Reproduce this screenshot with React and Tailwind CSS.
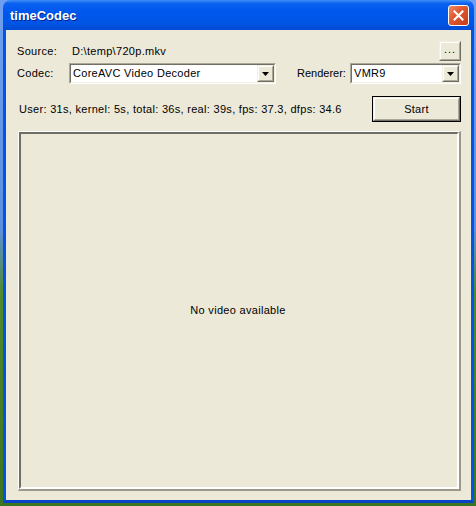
import React from 'react'

const font = { fontFamily: '"Liberation Sans", Arial, sans-serif' }

// classic 3D raised box (button face)
const Raised = ({ className = '', children }) => (
  <div className={`border border-t-[#f1efe2] border-l-[#f1efe2] border-r-[#716f64] border-b-[#716f64] ${className}`}>
    <div className="flex h-full w-full items-center justify-center border border-t-white border-l-white border-r-[#aca899] border-b-[#aca899] bg-[#ece9d8]">
      {children}
    </div>
  </div>
)

const Combo = ({ value, className = '' }) => (
  <div className={`border border-t-[#aca899] border-l-[#aca899] border-r-white border-b-white ${className}`}>
    <div className="flex h-full items-center border border-t-[#716f64] border-l-[#716f64] border-r-[#f1efe2] border-b-[#f1efe2] bg-white">
      <span className="flex-1 pl-[2px] text-black">{value}</span>
      <Raised className="h-[17px] w-[17px]">
        <svg width="7" height="4" viewBox="0 0 7 4">
          <path d="M0 0h7L3.5 4z" fill="#000" />
        </svg>
      </Raised>
    </div>
  </div>
)

export default function App() {
  return (
    <div
      className="h-[506px] w-[476px] bg-[linear-gradient(to_bottom,#6f9ff0_0%,#5d8fe0_45%,#4f8a2c_58%,#3d7420_100%)] pl-[3px] text-[11px] tracking-[0.3px] text-black"
      style={font}
    >
      <div className="flex h-[503px] w-[471px] flex-col">
        {/* title bar */}
        <div className="flex h-[30px] items-center rounded-t-[8px] bg-[linear-gradient(to_bottom,#3d8ff7_0%,#0b61ef_12%,#0058ee_35%,#0055e5_75%,#004bd4_100%)] pl-[7px] pr-[5px]">
          <span className="flex-1 pt-[2px] text-[13px] font-bold tracking-normal text-white [text-shadow:1px_1px_0_#0a1f8a]">
            timeCodec
          </span>
          <div className="flex h-[21px] w-[21px] items-center justify-center rounded-[3px] border border-white bg-[linear-gradient(135deg,#f08a66_0%,#e05a34_40%,#c83a17_100%)]">
            <svg width="11" height="11" viewBox="0 0 11 11">
              <path d="M1.5 1.5l8 8M9.5 1.5l-8 8" stroke="#fff" strokeWidth="2" strokeLinecap="square" />
            </svg>
          </div>
        </div>

        {/* client area */}
        <div className="flex flex-1 flex-col border-x-[3px] border-b-[3px] border-x-[#0055e5] border-b-[#0842c8] bg-[#ece9d8] pl-[11px] pr-[10px]">
          <div className="mt-[11px] flex h-[20px] items-center">
            <span className="w-[55px]">Source:</span>
            <span className="flex-1">D:\temp\720p.mkv</span>
            <Raised className="h-[20px] w-[22px]">
              <span className="pb-[3px] leading-none tracking-[1px]">...</span>
            </Raised>
          </div>

          <div className="mt-[2px] flex h-[21px] items-center">
            <span className="w-[52px]">Codec:</span>
            <Combo value="CoreAVC Video Decoder" className="h-[21px] w-[207px]" />
            <span className="ml-[21px] w-[53px] tracking-normal">Renderer:</span>
            <Combo value="VMR9" className="h-[21px] flex-1" />
          </div>

          <div className="mt-[12px] flex h-[26px] items-center">
            <span className="flex-1 pl-[2px]">
              User: 31s, kernel: 5s, total: 36s, real: 39s, fps: 37.3, dfps: 34.6
            </span>
            <div className="h-[26px] w-[89px] border border-black">
              <Raised className="h-full w-full">
                <span>Start</span>
              </Raised>
            </div>
          </div>

          <div className="ml-[1px] mt-[9px] h-[360px] border-l border-t border-l-white border-t-white border-r-2 border-b-2 border-r-[#9c998b] border-b-[#9c998b]">
            <div className="flex h-full items-center justify-center border-l-2 border-t-2 border-l-[#716f64] border-t-[#716f64] border-r-2 border-b-2 border-r-white border-b-white bg-[#ece9d8]">
              <span className="pr-[2px]">No video available</span>
            </div>
          </div>
        </div>
      </div>
    </div>
  )
}
